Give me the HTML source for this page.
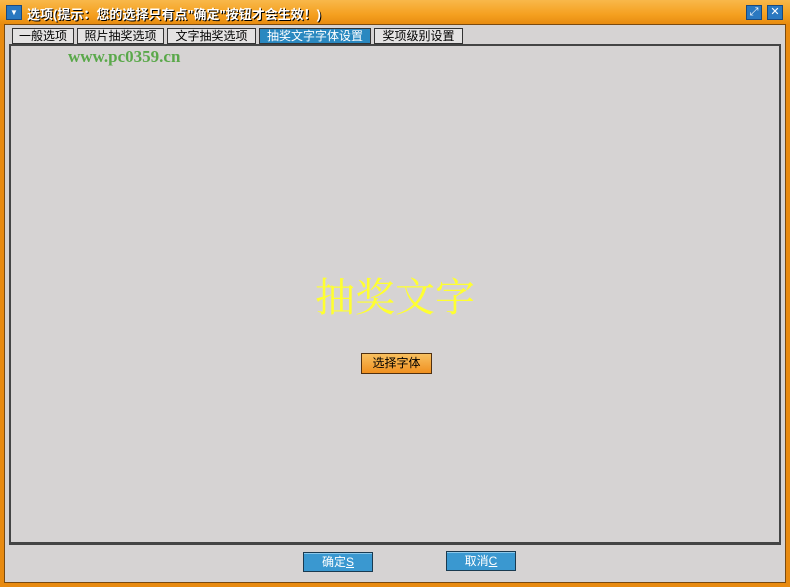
<!DOCTYPE html>
<html><head><meta charset="utf-8"><style>
*{margin:0;padding:0;box-sizing:border-box}
body{width:790px;height:587px;overflow:hidden;background:#e88a10;font-family:"Liberation Sans","Noto Sans CJK SC",sans-serif;position:relative}
.title{position:absolute;left:0;top:0;width:790px;height:24px;background:linear-gradient(#f8b84a,#f5a020 60%,#e88c10)}
.frame{position:absolute;left:4px;top:24px;width:782px;height:559px;background:#d6d3d3;border:1px solid #7a4a10}
.panel{position:absolute;left:9px;top:44px;width:772px;height:501px;border:2px solid #444;border-bottom-width:3px;background:#d6d3d3}
.tab{position:absolute;top:28px;height:16px;border:1px solid #333;background:#e4e2e2;font-size:12px;line-height:14px;text-align:center;color:#000}
.btn{position:absolute;height:20px;font-size:12px;line-height:18px;text-align:center;color:#fff;background:#3a98d0;border:1px solid #1a3a50;box-shadow:inset 0 1px #8cc8ea}
.ic{position:absolute;top:5px;width:16px;height:15px;background:#2a78c0;border:1px solid #1a4a80;color:#fff;font-size:11px;text-align:center;line-height:13px}
</style></head><body>
<div class="title"></div>
<div class="ic" style="left:6px;font-size:8px">▼</div>
<div style="position:absolute;left:27px;top:4px;font-size:13px;color:#fff;font-weight:bold;text-shadow:1px 1px #000">选项(提示：您的选择只有点"确定"按钮才会生效！)</div>
<div class="ic" style="left:746px">⤢</div>
<div class="ic" style="left:767px">✕</div>
<div class="frame"></div>
<div class="panel"></div>
<div class="tab" style="left:12px;width:62px">一般选项</div>
<div class="tab" style="left:77px;width:87px">照片抽奖选项</div>
<div class="tab" style="left:167px;width:89px">文字抽奖选项</div>
<div class="tab" style="left:259px;width:112px;background:#2a88c0;color:#fff">抽奖文字字体设置</div>
<div class="tab" style="left:374px;width:89px">奖项级别设置</div>
<div style="position:absolute;left:68px;top:47px;font-family:'Liberation Serif',serif;font-weight:bold;font-size:17px;color:#5aa84a">www.pc0359.cn</div>
<div style="position:absolute;left:295px;top:266px;width:200px;text-align:center;font-family:'Liberation Serif','Noto Serif CJK SC',serif;font-size:40px;color:#ffff30">抽奖文字</div>
<div style="position:absolute;left:361px;top:353px;width:71px;height:21px;background:linear-gradient(#f8c060,#f09020);border:1px solid #503010;font-size:12px;line-height:19px;text-align:center">选择字体</div>
<div class="btn" style="left:303px;top:552px;width:70px">确定<u>S</u></div>
<div class="btn" style="left:446px;top:551px;width:70px">取消<u>C</u></div>
</body></html>
